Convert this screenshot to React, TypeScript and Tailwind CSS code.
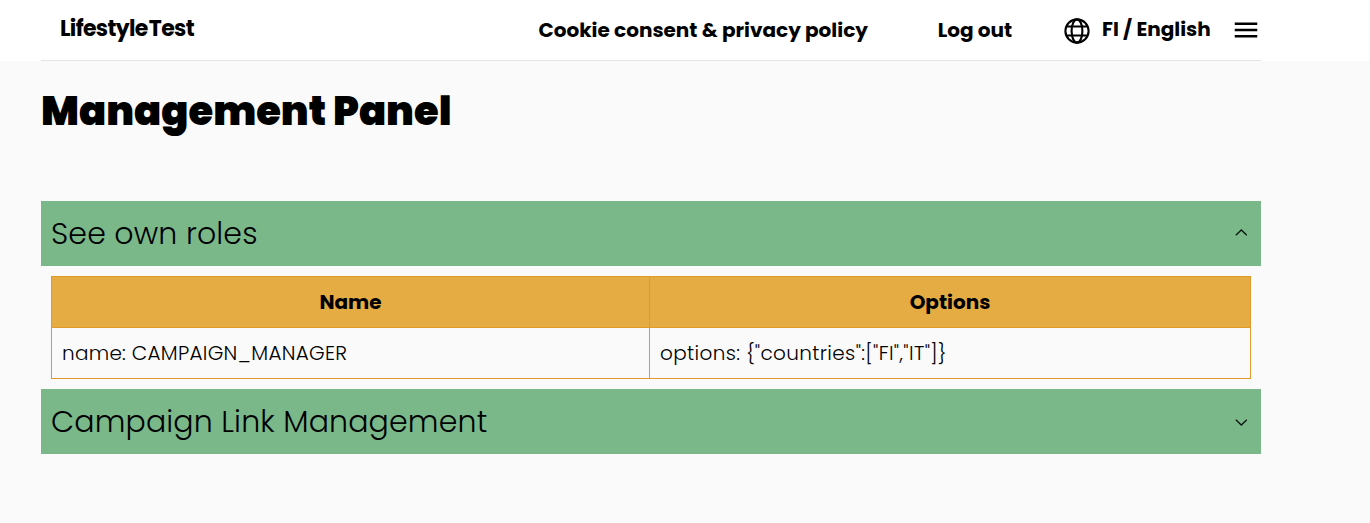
import { MdMenu } from "react-icons/md";

function Globe() {
  return (
    <svg className="mt-px size-[30px] shrink-0" viewBox="0 0 30 30" fill="none" stroke="#000" strokeWidth="2.1">
      <circle cx="15" cy="15" r="11.6" />
      <ellipse cx="15" cy="15" rx="5.4" ry="11.6" />
      <path d="M4.4 10.5 H25.6 M4.4 19.5 H25.6" />
    </svg>
  );
}

function Chevron({ open }: { open: boolean }) {
  return (
    <svg
      className={open ? "mb-[2px]" : "mt-[2px]"}
      width="12"
      height="7"
      viewBox="0 0 12 7"
      fill="none"
      stroke="#0b140e"
      strokeWidth="1.3"
    >
      <path d={open ? "M0.8 6.2 L6.3 1 L11.8 6.2" : "M0.8 0.8 L6.3 6 L11.8 0.8"} />
    </svg>
  );
}

function SectionHeader({ title, open }: { title: string; open: boolean }) {
  return (
    <button type="button" className="flex h-[65px] w-full items-center justify-between bg-[#7ab889] pr-[14px] pl-[10px] text-left">
      <span className="text-[30px] leading-[45px] font-light tracking-[0.16px] whitespace-nowrap">{title}</span>
      <Chevron open={open} />
    </button>
  );
}

export default function App() {
  return (
    <div className="min-h-screen bg-[#fafafa] font-['Poppins','Inter',sans-serif] text-black">
      <header className="h-[61px] bg-white pl-[41px]">
        <div className="flex h-[61px] w-[1220px] items-center border-b border-[#e4e4e4] pl-[19px]">
          <a className="mb-[2px] w-[479px] text-[22px] leading-8 font-bold tracking-[-0.65px] [word-spacing:-3px] whitespace-nowrap">Lifestyle Test</a>
          <a className="w-[399.5px] text-[20px] leading-8 font-bold whitespace-nowrap">Cookie consent &amp; privacy policy</a>
          <a className="w-[124.5px] text-[20px] leading-8 font-bold whitespace-nowrap">Log out</a>
          <Globe />
          <span className="mb-[2px] ml-[10px] w-[129px] shrink-0 text-[20px] leading-8 font-bold whitespace-nowrap">FI / English</span>
          <MdMenu className="size-[30px] shrink-0" />
        </div>
      </header>
      <main className="ml-[41px] w-[1220px]">
        <h1 className="h-[140px] pt-[20px] text-[40px] leading-[60px] font-black whitespace-nowrap">Management Panel</h1>
        <SectionHeader title="See own roles" open />
        <div className="p-[10px]">
          <table className="w-full table-fixed border-collapse text-[20px] leading-[30px]">
            <colgroup>
              <col className="w-[598px]" />
              <col />
            </colgroup>
            <thead>
              <tr className="h-[51px] bg-[#e6ac44]">
                <th className="border border-[#e09a2b] p-[10px] font-bold">Name</th>
                <th className="border border-[#e09a2b] p-[10px] font-bold">Options</th>
              </tr>
            </thead>
            <tbody>
              <tr className="h-[51px]">
                <td className="border border-[#e09a2b] p-[10px] font-light">
                  <span className="tracking-[0.27px]">name: CAMPAIGN_MANAGER</span>
                </td>
                <td className="border border-[#e09a2b] p-[10px] font-light">
                  <span className="tracking-[0.36px]">{'options: {"countries":["FI","IT"]}'}</span>
                </td>
              </tr>
            </tbody>
          </table>
        </div>
        <SectionHeader title="Campaign Link Management" open={false} />
      </main>
    </div>
  );
}
